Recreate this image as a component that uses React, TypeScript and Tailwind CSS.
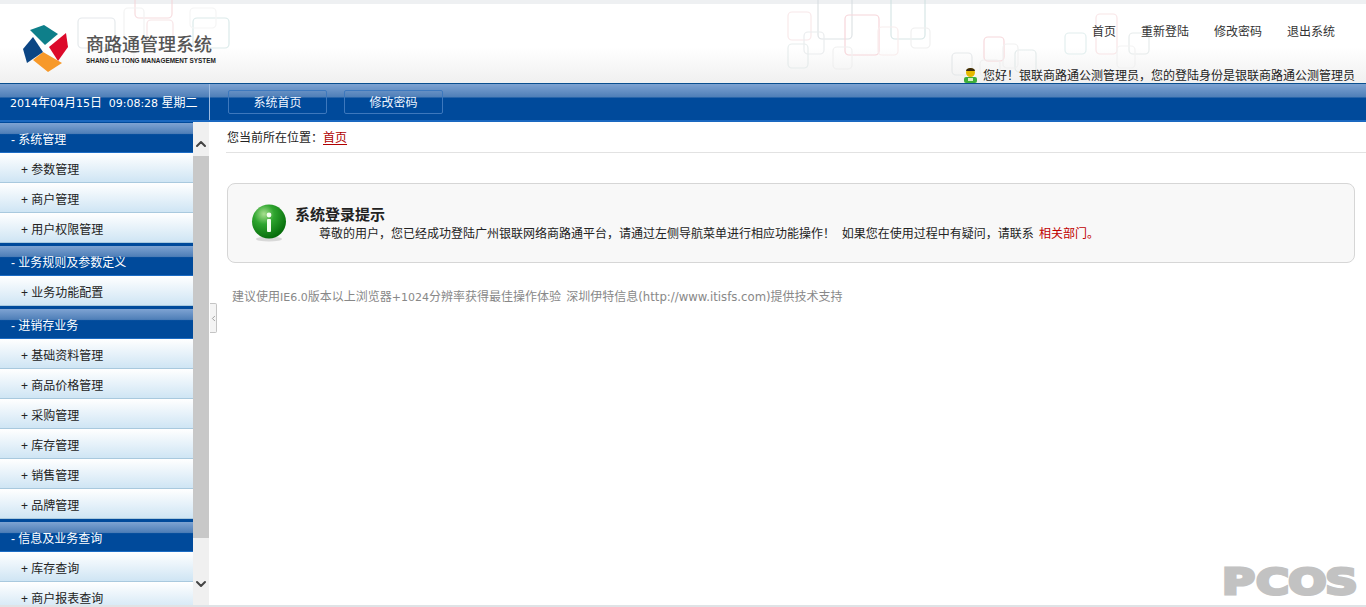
import type { ReactNode } from 'react';
import { ChevronDown, ChevronLeft, ChevronUp } from 'lucide-react';

const menu = [
  { title: '系统管理', items: ['参数管理', '商户管理', '用户权限管理'] },
  { title: '业务规则及参数定义', items: ['业务功能配置'] },
  { title: '进销存业务', items: ['基础资料管理', '商品价格管理', '采购管理', '库存管理', '销售管理', '品牌管理'] },
  { title: '信息及业务查询', items: ['库存查询', '商户报表查询'] },
];

// decorative outlined squares behind the header: x, y, w, h, colour
const squares: [number, number, number, number, string][] = [
  [78, 18, 37, 30, '#dfe4e8'], [135, -6, 37, 24, '#f6d4d8'], [147, 20, 26, 28, '#f6dfe2'], [193, 18, 36, 30, '#d3e6e6'],
  [107, 50, 27, 17, '#eef0f2'], [124, 8, 20, 40, '#f1f1f1'], [190, 8, 26, 20, '#f3f3f3'],
  [788, 12, 23, 28, '#f8e4e6'], [818, -4, 34, 43, '#d8dde0'], [845, 15, 34, 40, '#f6cdd2'], [891, -4, 34, 43, '#cfe2e2'],
  [804, 32, 20, 22, '#e6e9eb'], [788, 44, 20, 24, '#e3eaea'], [833, 47, 19, 22, '#eeeeee'], [911, 28, 19, 20, '#ededed'], [878, 27, 20, 28, '#f8eaea'],
  [984, 37, 20, 24, '#f6d0d4'], [952, 53, 20, 22, '#e2e5e7'], [1015, 50, 21, 22, '#dfe8e8'], [1003, 44, 15, 24, '#efefef'], [980, 60, 20, 16, '#eeeeee'],
  [1065, 33, 21, 21, '#dcecec'], [1096, 14, 21, 40, '#f8e0e2'], [1129, 33, 20, 21, '#e2e8e8'], [1117, 46, 18, 22, '#f1f1f1'],
];

// latin runs in the original are a wider face than the CJK text around them
function Latin({ children }: { children: ReactNode }) {
  return <span className="text-[11px] font-['DejaVu_Sans',sans-serif]">{children}</span>;
}

function Logo() {
  return (
    <svg width="50" height="50" viewBox="0 0 50 50" className="shrink-0">
      <polygon points="7,5 21,0 35,9 22,20" fill="#0e7f8a" />
      <polygon points="26,22 43,8 45,22 35,36" fill="#dc0a2a" />
      <polygon points="10,35 20,27 39,38 25,47" fill="#f7992a" />
      <polygon points="0,24 10,12 20,27 4,38" fill="#0b4584" />
    </svg>
  );
}

function UserIcon() {
  return (
    <svg width="15" height="16" viewBox="0 0 15 16" className="shrink-0">
      <rect x="1" y="10" width="13" height="6" rx="2" fill="#3fae3a" />
      <rect x="5" y="11" width="5" height="3" fill="#d8f0c8" />
      <circle cx="7.5" cy="5.5" r="4.5" fill="#e6b800" />
      <path d="M3 4 C3 0 12 0 12 4 Z" fill="#3a2a10" />
    </svg>
  );
}

function InfoIcon() {
  return (
    <svg width="36" height="38" viewBox="0 0 36 38" className="shrink-0">
      <defs>
        <radialGradient id="ball" cx="35%" cy="28%" r="75%">
          <stop offset="0%" stopColor="#a8e090" />
          <stop offset="40%" stopColor="#2fa52f" />
          <stop offset="100%" stopColor="#056b0a" />
        </radialGradient>
      </defs>
      <ellipse cx="18" cy="35" rx="13" ry="2.5" fill="#d8d8d8" />
      <circle cx="18" cy="17.5" r="17" fill="url(#ball)" />
      <circle cx="18" cy="11" r="2.4" fill="#f4fff0" />
      <rect x="16" y="15" width="4" height="13" rx="1" fill="#f4fff0" />
    </svg>
  );
}

export default function App() {
  return (
    <div className="h-[607px] w-[1366px] flex flex-col overflow-hidden bg-white text-[12px] leading-none text-[#222] font-['Liberation_Sans','Noto_Sans_CJK_SC',sans-serif]">
      {/* Header */}
      <header className="relative h-[83px] shrink-0 flex justify-between bg-gradient-to-b from-white from-55% to-[#f0f0f0] border-t-4 border-[#eef0f2]">
        <svg className="absolute left-0 top-[-4px] opacity-80" width="1366" height="83">
          {squares.map(([x, y, w, h, c], i) => (
            <rect key={i} x={x} y={y} width={w} height={h} rx="4" fill="none" stroke={c} strokeWidth="1.2" />
          ))}
        </svg>
        <div className="relative flex items-start gap-[13px] pl-[23px] pt-[21px]">
          <Logo />
          <div className="pt-[9px]">
            <div className="text-[18px] leading-[22px] font-medium text-[#555]">商路通管理系统</div>
            <div className="text-[6.4px] leading-[9px] font-bold text-[#222] whitespace-nowrap">SHANG LU TONG MANAGEMENT SYSTEM</div>
          </div>
        </div>
        <div className="relative flex flex-col items-end justify-between pr-[11px] pt-[22px]">
          <nav className="flex gap-[25px] pr-[20px] text-[#333]">
            <a>首页</a>
            <a>重新登陆</a>
            <a>修改密码</a>
            <a>退出系统</a>
          </nav>
          <div className="flex items-center gap-[5px]">
            <UserIcon />
            <span className="pt-[2px]">您好！银联商路通公测管理员，您的登陆身份是银联商路通公测管理员</span>
          </div>
        </div>
      </header>

      {/* Blue nav bar */}
      <div className="h-[39px] shrink-0 flex border-t border-[#0a4f8f] border-b-2 border-b-[#1a68c0] bg-[linear-gradient(#7ea3d2,#4f7fb8_36%,#004a9b_39%,#004a9b)] text-white">
        <div className="w-[210px] shrink-0 flex items-center pl-[10px] pt-[2px] border-r border-[#9dbbe0] whitespace-pre">
          <Latin>2014</Latin>年<Latin>04</Latin>月<Latin>15</Latin>日  <Latin>09:08:28</Latin> 星期二
        </div>
        <div className="flex items-center gap-[17px] pl-[18px]">
          {['系统首页', '修改密码'].map((label) => (
            <div key={label} className="w-[99px] h-[24px] flex items-center justify-center pt-[2px] rounded-[2px] border border-[#3d78bd] text-[#eef5ff]">
              {label}
            </div>
          ))}
        </div>
      </div>

      <div className="flex-1 flex min-h-0 border-b-2 border-[#dfe3e6]">
        {/* Sidebar */}
        <aside className="w-[193px] shrink-0 overflow-hidden bg-[#004a9b]">
          {menu.map((group, g) => (
            <div key={group.title} className={g === 0 ? 'pt-px' : 'pt-[3px]'}>
              <div className="h-[30px] flex items-center pl-[11px] pt-[4px] text-white border-b border-[#1c6cc4] bg-[linear-gradient(#7ea3d2,#4f7fb8_36%,#004a9b_40%,#004a9b)]">
                - {group.title}
              </div>
              {group.items.map((item) => (
                <div key={item} className="h-[30px] flex items-center pl-[21px] pt-[4px] border-b border-[#a9c9de] bg-gradient-to-b from-white to-[#cfe5f4] text-[#222]">
                  +&nbsp;{item}
                </div>
              ))}
            </div>
          ))}
        </aside>

        {/* Scrollbar */}
        <div className="w-[16px] shrink-0 flex flex-col bg-[#f0f0f0]">
          <div className="h-[34px] flex items-end justify-center pb-[2px] text-[#444]">
            <ChevronUp size={20} strokeWidth={3} />
          </div>
          <div className="h-[382px] bg-[#c8c8c8]" />
          <div className="flex-1 flex items-end justify-center pb-[11px] text-[#444]">
            <ChevronDown size={20} strokeWidth={3} />
          </div>
        </div>

        {/* Collapse handle */}
        <div className="w-[8px] shrink-0 flex items-start pt-[181px]">
          <div className="w-[7px] h-[30px] ml-px flex items-center justify-center rounded-r-[2px] border border-l-0 border-[#c4c4c4] bg-[#f4f4f4] text-[#888]">
            <ChevronLeft size={9} className="shrink-0" />
          </div>
        </div>

        {/* Main */}
        <main className="flex-1 min-w-0 pl-[9px]">
          <div className="h-[31px] flex items-center pl-px pt-[1px] border-b border-[#e2e2e2]">
            您当前所在位置：<a className="text-[#b00000] underline underline-offset-2">首页</a>
          </div>
          <div className="mt-[30px] mr-[11px] ml-px h-[80px] flex items-start gap-[8px] pl-[23px] pt-[20px] rounded-[8px] border border-[#d6d6d6] bg-[#f8f8f8]">
            <InfoIcon />
            <div className="pt-[3px]">
              <h3 className="text-[15px] leading-[16px] font-bold text-[#222]">系统登录提示</h3>
              <p className="mt-[4px] pl-[24px] leading-[14px] whitespace-pre">
                尊敬的用户，您已经成功登陆广州银联网络商路通平台，请通过左侧导航菜单进行相应功能操作！  如果您在使用过程中有疑问，请联系 <span className="ml-[2px] text-[#c00000]">相关部门。</span>
              </p>
            </div>
          </div>
          <p className="mt-[28px] pl-[6px] text-[#888] whitespace-pre">
            建议使用<Latin>IE6.0</Latin>版本以上浏览器<Latin>+1024</Latin>分辨率获得最佳操作体验 <span className="ml-[2px]">深圳伊特信息</span><span className="text-[11.7px] font-['DejaVu_Sans',sans-serif]">(http://www.itisfs.com)</span>提供技术支持
          </p>
        </main>
      </div>

      {/* Watermark */}
      <div className="absolute left-[1222px] top-[568px] w-[136px] h-[28px] flex items-center justify-between text-[#c2c2c2] text-[36px] font-bold leading-none font-['DejaVu_Sans',sans-serif] [-webkit-text-stroke:3px_#c2c2c2]">
        <span className="w-[33px] text-center scale-x-[1.25]">P</span>
        <span className="w-[33px] text-center scale-x-[1.25]">C</span>
        <span className="w-[33px] text-center scale-x-[1.25]">O</span>
        <span className="w-[33px] text-center scale-x-[1.25]">S</span>
      </div>
    </div>
  );
}
